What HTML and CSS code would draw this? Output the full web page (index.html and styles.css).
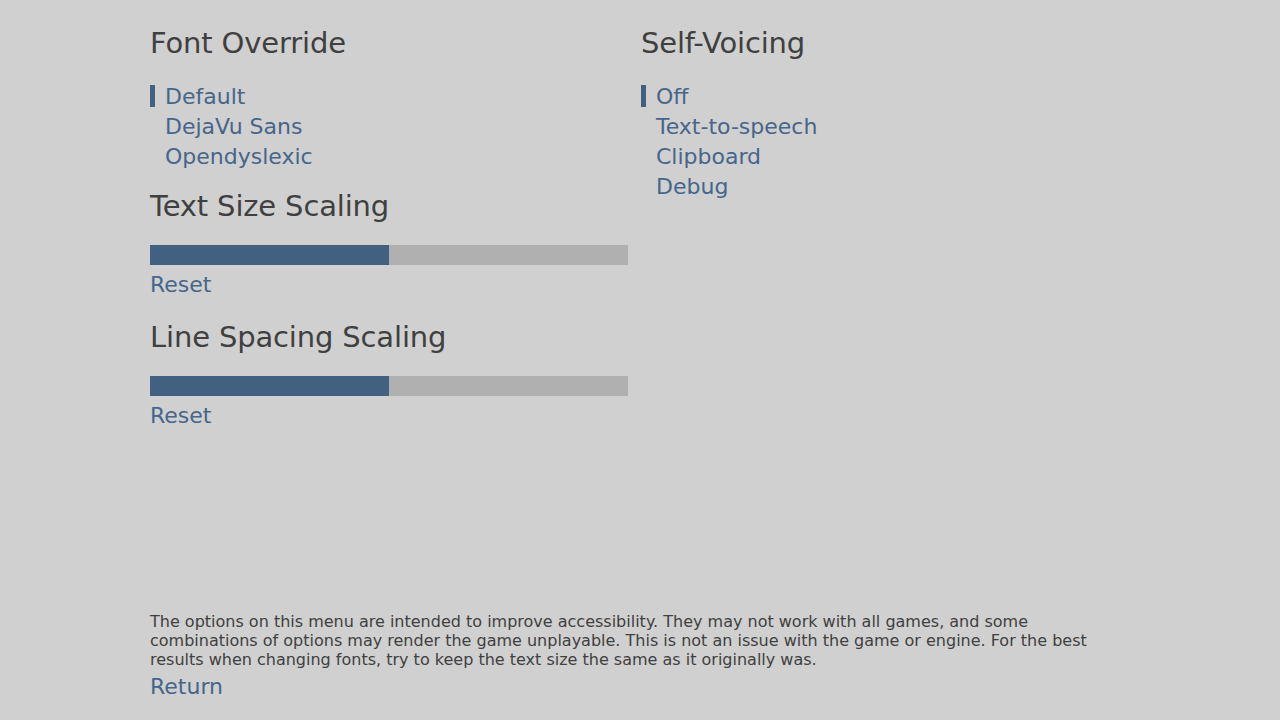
FILE: index.html
```html
<!DOCTYPE html>
<html lang="en">
<head>
    <meta charset="UTF-8">
    <title>Accessibility Menu</title>
    <link rel="stylesheet" href="styles.css">
</head>
<body>

<div class="screen">
    <div class="columns">
        <div class="column left-col">
            <h2>Font Override</h2>
            <ul class="choices">
                <li class="selected">Default</li>
                <li>DejaVu Sans</li>
                <li>Opendyslexic</li>
            </ul>

            <h2>Text Size Scaling</h2>
            <div class="bar"><div class="bar-fill" style="width: 50%"></div></div>
            <div class="reset">Reset</div>

            <h2>Line Spacing Scaling</h2>
            <div class="bar"><div class="bar-fill" style="width: 50%"></div></div>
            <div class="reset">Reset</div>
        </div>

        <div class="column right-col">
            <h2>Self-Voicing</h2>
            <ul class="choices">
                <li class="selected">Off</li>
                <li>Text-to-speech</li>
                <li>Clipboard</li>
                <li>Debug</li>
            </ul>
        </div>
    </div>

    <div class="footer">
        <p class="note">The options on this menu are intended to improve accessibility. They may not work with all games, and some combinations of options may render the game unplayable. This is not an issue with the game or engine. For the best results when changing fonts, try to keep the text size the same as it originally was.</p>
        <div class="return">Return</div>
    </div>
</div>

</body>
</html>
```

FILE: styles.css
```css
* {
    box-sizing: border-box;
}
html, body {
    margin: 0;
    padding: 0;
}
body {
    font-family: "DejaVu Sans", "Liberation Sans", sans-serif;
    background-color: #d0d0d0;
    color: #404040;
}
.screen {
    height: 720px;
    display: flex;
    flex-direction: column;
    padding: 26px 0 18px 150px;
}
.columns {
    display: flex;
    gap: 13px;
}
.left-col {
    width: 478px;
}
h2 {
    font-size: 29px;
    font-weight: normal;
    line-height: 34px;
    letter-spacing: -0.15px;
    margin: 0 0 22px;
    color: #404040;
}
.choices {
    list-style: none;
    margin: 0 0 17px;
    padding: 0;
}
.choices li {
    font-size: 22px;
    line-height: 30px;
    padding-left: 15px;
    color: #46668a;
    position: relative;
}
/* marker next to the active choice */
.choices li.selected::before {
    content: "";
    position: absolute;
    left: 0;
    top: 3px;
    width: 5px;
    height: 22px;
    background-color: #42607f;
}
.bar {
    height: 20px;
    background-color: #b0b0b0;
}
.bar-fill {
    height: 100%;
    background-color: #42607f;
}
.reset {
    font-size: 22px;
    line-height: 30px;
    margin-top: 5px;
    margin-bottom: 20px;
    color: #46668a;
}
.footer {
    margin-top: auto;
    width: 980px;
}
.note {
    font-size: 16px;
    line-height: 19px;
    margin: 0 0 3px;
    color: #404040;
}
.return {
    font-size: 22px;
    line-height: 30px;
    color: #46668a;
}
```
